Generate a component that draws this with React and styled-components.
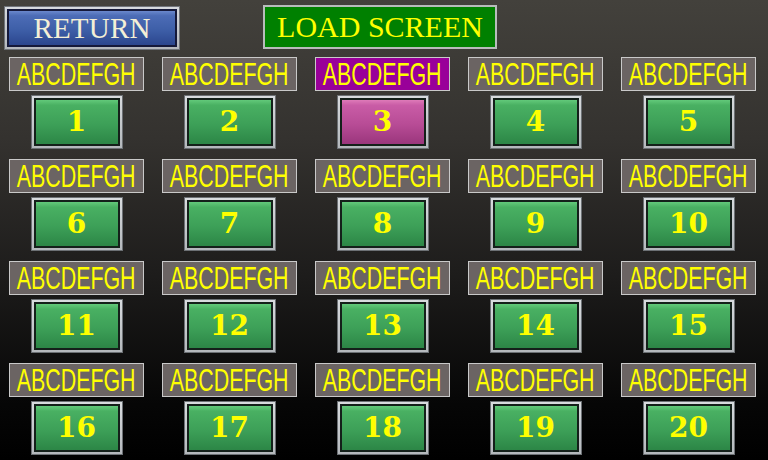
import React from 'react'
import styled, { createGlobalStyle } from 'styled-components';

const GlobalStyle = createGlobalStyle`
  html, body {
    margin: 0;
    padding: 0;
    background: #000;
  }
`

const slots = Array.from({ length: 20 }, (_, i) => ({
  id: i + 1,
  name: 'ABCDEFGH',
  selected: i + 1 === 3,
}));

const App = () => {
  return (
    <Screen>
      <GlobalStyle />
      <Header>
        <ReturnFrame>
          <ReturnFace>RETURN</ReturnFace>
        </ReturnFrame>
        <Title>LOAD SCREEN</Title>
      </Header>

      <SlotGrid>
        {slots.map((slot) => (
          <Slot key={slot.id}>
            <NameTag $selected={slot.selected}>
              <NameText>{slot.name}</NameText>
            </NameTag>
            <SlotFrame>
              <SlotFace $selected={slot.selected}>{slot.id}</SlotFace>
            </SlotFrame>
          </Slot>
        ))}
      </SlotGrid>
    </Screen>
  )
}

export default App;

const Screen = styled.div`
  width: 768px;
  height: 460px;
  overflow: hidden;
  box-sizing: border-box;
  background: linear-gradient(180deg, #43413c 0%, #34322f 30%, #1d1c1b 60%, #060606 88%, #000 100%);
  display: flex;
  flex-direction: column;
`

const Header = styled.div`
  display: flex;
  align-items: flex-start;
  gap: 83px;
  padding: 5px 0 0 4px;
  height: 50px;
  box-sizing: border-box;
`

const ReturnFrame = styled.div`
  margin-top: 1px;
  width: 176px;
  height: 44px;
  box-sizing: border-box;
  padding: 2px;
  background: linear-gradient(180deg, #d6d9de, #b4b8be);
  border: 1px solid #70747a;
  display: flex;
`

const ReturnFace = styled.div`
  flex: 1;
  border: 2px solid #15193a;
  background: linear-gradient(180deg, #6a88cc 0%, #4c6cb6 14%, #3e5fa8 55%, #2b468e 100%);
  display: flex;
  align-items: center;
  justify-content: center;
  font-family: "Liberation Serif", serif;
  font-size: 29px;
  line-height: 1;
  color: #f4efd6;
  letter-spacing: 0.2px;
`

const Title = styled.div`
  width: 234px;
  height: 44px;
  box-sizing: border-box;
  border: 2px solid #b8bcbc;
  background: #008000;
  display: flex;
  align-items: center;
  justify-content: center;
  font-family: "Liberation Serif", serif;
  font-size: 30px;
  line-height: 1;
  color: #ffff00;
`

const SlotGrid = styled.div`
  margin-top: 7px;
  display: grid;
  grid-template-columns: repeat(5, 153px);
  row-gap: 10px;
`

const Slot = styled.div`
  display: flex;
  flex-direction: column;
  align-items: center;
  gap: 4px;
`

const NameTag = styled.div`
  width: 135px;
  height: 34px;
  box-sizing: border-box;
  border: 1px solid #c9c9c9;
  background: ${(p) => (p.$selected ? '#990099' : '#6b6463')};
  display: flex;
  align-items: center;
  justify-content: center;
  overflow: hidden;
`

const NameText = styled.span`
  flex-shrink: 0;
  display: inline-block;
  white-space: nowrap;
  font-family: "Liberation Sans", Arial, sans-serif;
  font-size: 31px;
  line-height: 1;
  color: #ffff00;
  transform: scaleX(0.69);
`

const SlotFrame = styled.div`
  width: 92px;
  height: 54px;
  box-sizing: border-box;
  padding: 2px;
  background: linear-gradient(180deg, #d8dbde, #b4b8bc);
  border: 1px solid #6c7074;
  display: flex;
`

const SlotFace = styled.div`
  flex: 1;
  border: 2px solid #14201a;
  background: ${(p) =>
    p.$selected
      ? 'linear-gradient(180deg, #de7ab8 0%, #c95ca6 12%, #b84c96 55%, #9a367c 100%)'
      : 'linear-gradient(180deg, #62c97a 0%, #49b062 12%, #3da058 55%, #2c8646 100%)'};
  display: flex;
  align-items: center;
  justify-content: center;
  font-family: "DejaVu Serif", "Liberation Serif", serif;
  font-weight: bold;
  font-size: 28px;
  line-height: 1;
  color: #ffff00;
`
